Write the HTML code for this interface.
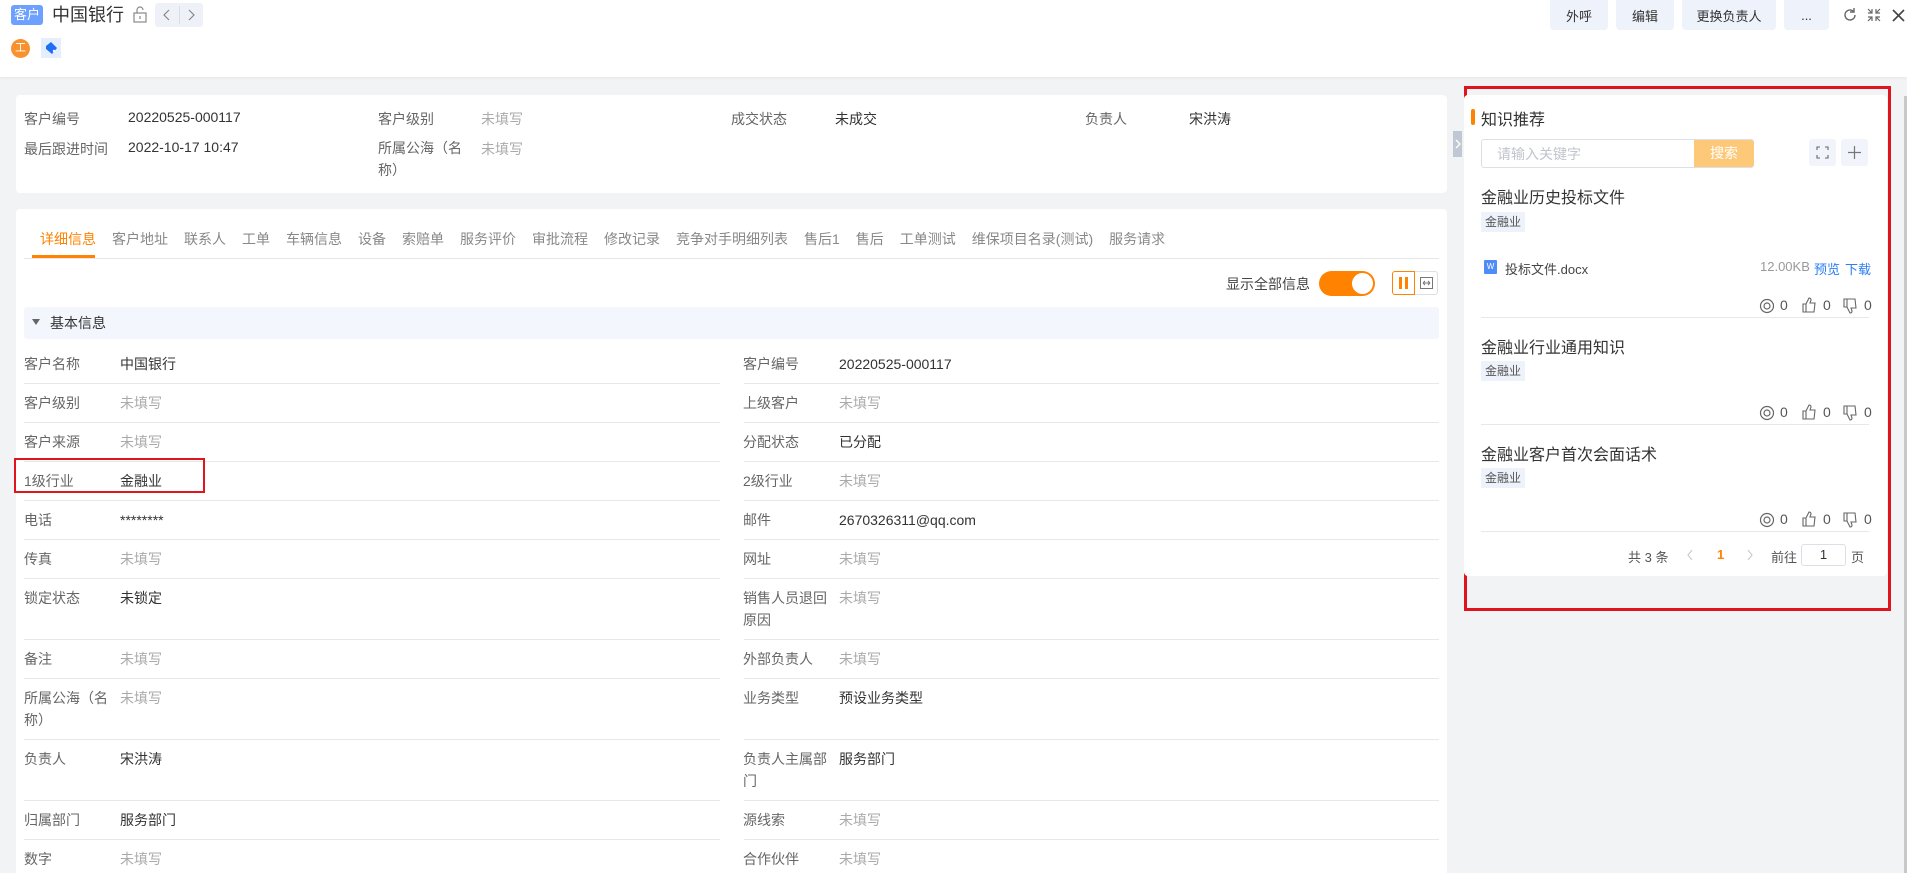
<!DOCTYPE html>
<html><head><meta charset="utf-8">
<style>
*{box-sizing:border-box;margin:0;padding:0}
body{width:1907px;height:873px;overflow:hidden;background:#f2f3f5;font-family:"Liberation Sans","Noto Sans CJK SC",sans-serif;font-size:14px;color:#333;position:relative}
.a{position:absolute;white-space:nowrap}
.lb{color:#666}
.ph{color:#aaa}
.btn{position:absolute;top:0;height:30px;background:#eef2fb;border-radius:0 0 4px 4px;font-size:13px;color:#333;display:flex;align-items:center;justify-content:center}
.tabs span{margin-right:16px;color:#888}
.dv{position:absolute;height:1px;background:#e8e8e8}
.tag{position:absolute;left:1481px;width:44px;height:20px;background:#eef2fb;font-size:12px;color:#555;text-align:center;line-height:20px}
.ktitle{position:absolute;left:1481px;font-size:16px;color:#333}
</style></head><body>
<!-- header -->
<div class="a" style="left:0;top:0;width:1907px;height:77px;background:#fff;box-shadow:0 1px 3px rgba(0,0,0,.06)"></div>
<div class="a" style="left:11px;top:5px;width:32px;height:20px;background:#6ea0ff;border-radius:3px;color:#fff;font-size:13px;text-align:center;line-height:20px">客户</div>
<div class="a" style="left:52px;top:2px;font-size:18px;color:#333;line-height:26px">中国银行</div>
<svg class="a" style="left:132px;top:6px" width="16" height="17" viewBox="0 0 16 17"><rect x="2" y="7" width="12" height="9" fill="none" stroke="#888" stroke-width="1.2"/><path d="M5 7V4a3 3 0 0 1 6 0" fill="none" stroke="#888" stroke-width="1.2"/><path d="M8 10v3" stroke="#888" stroke-width="1.2"/></svg>
<div class="a" style="left:155px;top:3px;width:48px;height:24px;background:#eef1f8;border-radius:3px"></div>
<div class="a" style="left:179px;top:6px;width:1px;height:18px;background:#d8dce5"></div>
<svg class="a" style="left:162px;top:9px" width="10" height="12"><path d="M7 1L2 6l5 5" fill="none" stroke="#888" stroke-width="1.2"/></svg>
<svg class="a" style="left:186px;top:9px" width="10" height="12"><path d="M3 1l5 5-5 5" fill="none" stroke="#888" stroke-width="1.2"/></svg>
<div class="a" style="left:11px;top:39px;width:19px;height:19px;border-radius:50%;background:#f7922e;color:#fff;font-size:11px;text-align:center;line-height:19px">工</div>
<div class="a" style="left:41px;top:38px;width:20px;height:20px;background:#e4eeff"></div>
<svg class="a" style="left:43px;top:40px" width="16" height="16"><path d="M3 6l5-4 6 6-5 6-6-5z" fill="#1f6ff5"/><circle cx="11" cy="11" r="1.2" fill="#fff"/></svg>
<div class="btn" style="left:1550px;width:58px">外呼</div>
<div class="btn" style="left:1616px;width:58px">编辑</div>
<div class="btn" style="left:1682px;width:94px">更换负责人</div>
<div class="btn" style="left:1784px;width:45px">...</div>
<svg class="a" style="left:1842px;top:7px" width="16" height="16"><path d="M13 8a5 5 0 1 1-1.6-3.7" fill="none" stroke="#666" stroke-width="1.4"/><path d="M12 1v4h-4" fill="none" stroke="#666" stroke-width="1.4"/></svg>
<svg class="a" style="left:1866px;top:7px" width="16" height="16"><path d="M2 2l4 4M6 2v4H2M14 2l-4 4M10 2v4h4M2 14l4-4M2 10h4v4M14 14l-4-4M14 10h-4v4" fill="none" stroke="#666" stroke-width="1.2"/></svg>
<svg class="a" style="left:1891px;top:8px" width="15" height="15"><path d="M2 2l11 11M13 2L2 13" stroke="#444" stroke-width="1.6"/></svg>

<!-- top card -->
<div class="a" style="left:16px;top:95px;width:1431px;height:98px;background:#fff;border-radius:4px"></div>
<div class="a lb" style="left:24px;top:109px">客户编号</div>
<div class="a" style="left:128px;top:109px">20220525-000117</div>
<div class="a lb" style="left:378px;top:109px">客户级别</div>
<div class="a ph" style="left:481px;top:109px">未填写</div>
<div class="a lb" style="left:731px;top:109px">成交状态</div>
<div class="a" style="left:835px;top:109px">未成交</div>
<div class="a lb" style="left:1085px;top:109px">负责人</div>
<div class="a" style="left:1189px;top:109px">宋洪涛</div>
<div class="a lb" style="left:24px;top:139px">最后跟进时间</div>
<div class="a" style="left:128px;top:139px">2022-10-17 10:47</div>
<div class="a lb" style="left:378px;top:137px;line-height:22px;white-space:normal;width:88px">所属公海（名称）</div>
<div class="a ph" style="left:481px;top:139px">未填写</div>
<div class="a" style="left:1453px;top:131px;width:9px;height:26px;background:#c0c8d4"></div>
<svg class="a" style="left:1454px;top:139px" width="8" height="10"><path d="M2 1l4 4-4 4" fill="none" stroke="#fff" stroke-width="1.3"/></svg>

<!-- main card -->
<div class="a" style="left:16px;top:209px;width:1431px;height:664px;background:#fff;border-radius:4px 4px 0 0"></div>
<div class="a tabs" style="left:40px;top:229px;font-size:14px"><span style="color:#ff8200">详细信息</span><span>客户地址</span><span>联系人</span><span>工单</span><span>车辆信息</span><span>设备</span><span>索赔单</span><span>服务评价</span><span>审批流程</span><span>修改记录</span><span>竞争对手明细列表</span><span>售后1</span><span>售后</span><span>工单测试</span><span>维保项目名录(测试)</span><span>服务请求</span></div>
<div class="a" style="left:24px;top:258px;width:1415px;height:1px;background:#e6e6e6"></div>
<div class="a" style="left:32px;top:255px;width:63px;height:3px;background:#ff8200"></div>
<div class="a" style="left:1226px;top:274px;color:#444">显示全部信息</div>
<div class="a" style="left:1319px;top:271px;width:56px;height:25px;border-radius:13px;background:#ff8200"></div>
<div class="a" style="left:1352px;top:273px;width:21px;height:21px;border-radius:50%;background:#fff"></div>
<div class="a" style="left:1392px;top:271px;width:23px;height:24px;border:1px solid #ff8200;border-radius:3px 0 0 3px"></div>
<div class="a" style="left:1399px;top:277px;width:3px;height:12px;background:#ff8200"></div>
<div class="a" style="left:1405px;top:277px;width:3px;height:12px;background:#ff8200"></div>
<div class="a" style="left:1415px;top:271px;width:23px;height:24px;border:1px solid #dcdfe6;border-left:none;border-radius:0 3px 3px 0"></div>
<svg class="a" style="left:1420px;top:277px" width="13" height="12"><rect x="0.5" y="0.5" width="12" height="11" fill="none" stroke="#777"/><path d="M3 6h7M3 6l2-2M3 6l2 2M10 6l-2-2M10 6l-2 2" stroke="#777"/></svg>
<div class="a" style="left:24px;top:307px;width:1415px;height:32px;background:#f3f6fd;border-radius:3px"></div>
<svg class="a" style="left:32px;top:319px" width="8" height="7"><path d="M0 0h8L4 6z" fill="#666"/></svg>
<div class="a" style="left:50px;top:313px;color:#333">基本信息</div>

<div id="rows"></div>
<script>
var R=[
["客户名称","中国银行",0,"客户编号","20220525-000117",0,353,383],
["客户级别","未填写",1,"上级客户","未填写",1,392,422],
["客户来源","未填写",1,"分配状态","已分配",0,431,461],
["1级行业","金融业",0,"2级行业","未填写",1,470,500],
["电话","********",0,"邮件","2670326311@qq.com",0,509,539],
["传真","未填写",1,"网址","未填写",1,548,578],
["锁定状态","未锁定",0,"销售人员退回原因","未填写",1,587,639],
["备注","未填写",1,"外部负责人","未填写",1,648,678],
["所属公海（名称）","未填写",1,"业务类型","预设业务类型",0,687,739],
["负责人","宋洪涛",0,"负责人主属部门","服务部门",0,748,800],
["归属部门","服务部门",0,"源线索","未填写",1,809,839],
["数字","未填写",1,"合作伙伴","未填写",1,848,-1]];
var h="";
R.forEach(function(r){
var t=r[6];
h+='<div class="a lb" style="left:24px;top:'+t+'px;width:84px;white-space:normal;line-height:22px">'+r[0]+'</div>';
h+='<div class="a '+(r[2]?'ph':'')+'" style="left:120px;top:'+t+'px;line-height:22px">'+r[1]+'</div>';
h+='<div class="a lb" style="left:743px;top:'+t+'px;width:84px;white-space:normal;line-height:22px">'+r[3]+'</div>';
h+='<div class="a '+(r[5]?'ph':'')+'" style="left:839px;top:'+t+'px;line-height:22px">'+r[4]+'</div>';
if(r[7]>0){h+='<div class="dv" style="left:24px;top:'+r[7]+'px;width:696px"></div><div class="dv" style="left:744px;top:'+r[7]+'px;width:695px"></div>';}
});
document.getElementById("rows").innerHTML=h;
</script>
<div class="a" style="left:14px;top:458px;width:191px;height:35px;border:2px solid #e0141e"></div>

<!-- right panel -->
<div class="a" style="left:1464px;top:86px;width:427px;height:525px;border:3px solid #e0141e"></div>
<div class="a" style="left:1464px;top:95px;width:423px;height:481px;background:#fff;border-radius:4px"></div>
<div class="a" style="left:1471px;top:109px;width:4px;height:16px;background:#ff8200;border-radius:2px"></div>
<div class="a" style="left:1481px;top:106px;font-size:16px;color:#333">知识推荐</div>
<div class="a" style="left:1481px;top:139px;width:273px;height:29px;border:1px solid #dcdfe6;border-radius:3px"></div>
<div class="a" style="left:1497px;top:143px;color:#c0c4cc;font-size:14px;line-height:22px">请输入关键字</div>
<div class="a" style="left:1694px;top:140px;width:60px;height:27px;background:#fdc878;color:#fff;text-align:center;line-height:27px;font-size:14px;border-radius:0 3px 3px 0">搜索</div>
<div class="a" style="left:1809px;top:139px;width:27px;height:27px;background:#f1f4fb;border-radius:3px"></div>
<svg class="a" style="left:1816px;top:146px" width="13" height="13"><path d="M1 4V1h3M9 1h3v3M12 9v3H9M4 12H1V9" fill="none" stroke="#666" stroke-width="1.1"/></svg>
<div class="a" style="left:1841px;top:139px;width:27px;height:27px;background:#f1f4fb;border-radius:3px"></div>
<svg class="a" style="left:1847px;top:145px" width="15" height="15"><path d="M7.5 1v13M1 7.5h13" stroke="#777" stroke-width="1.2"/></svg>

<div class="ktitle" style="top:184px">金融业历史投标文件</div>
<div class="tag" style="top:212px">金融业</div>
<div class="a" style="left:1484px;top:260px;width:13px;height:14px;background:#4e8cf7;color:#fff;font-size:8px;text-align:center;line-height:14px;border-radius:1px">W</div>
<div class="a" style="left:1505px;top:259px;font-size:13px;color:#444">投标文件.docx</div>
<div class="a" style="left:1760px;top:259px;font-size:13px;color:#999">12.00KB</div>
<div class="a" style="left:1814px;top:259px;font-size:13px;color:#2a7df3">预览</div>
<div class="a" style="left:1845px;top:259px;font-size:13px;color:#2a7df3">下载</div>

<div id="stats"></div>
<div class="dv" style="left:1481px;top:317px;width:388px"></div>
<div class="ktitle" style="top:334px">金融业行业通用知识</div>
<div class="tag" style="top:361px">金融业</div>
<div class="dv" style="left:1481px;top:424px;width:388px"></div>
<div class="ktitle" style="top:441px">金融业客户首次会面话术</div>
<div class="tag" style="top:468px">金融业</div>
<div class="dv" style="left:1481px;top:531px;width:388px"></div>
<script>
var s="";[306,413,520].forEach(function(y){
var t=y-9;
s+='<svg class="a" style="left:1759px;top:'+(t+1)+'px" width="16" height="16"><circle cx="8" cy="8" r="6.5" fill="none" stroke="#666" stroke-width="1.2"/><circle cx="8" cy="8" r="3" fill="none" stroke="#666" stroke-width="1.2"/></svg><div class="a" style="left:1780px;top:'+t+'px;color:#555">0</div>';
s+='<svg class="a" style="left:1802px;top:'+t+'px" width="15" height="16"><path d="M1 7h3v8H1zM4 7l3-6c1.5 0 2 1 2 2l-1 3h5l-1 9H4" fill="none" stroke="#666" stroke-width="1.1"/></svg><div class="a" style="left:1823px;top:'+t+'px;color:#555">0</div>';
s+='<svg class="a" style="left:1843px;top:'+(t+1)+'px" width="15" height="16"><path d="M1 1h3v8H1zM4 9l3 6c1.5 0 2-1 2-2l-1-3h5L12 1H4" fill="none" stroke="#666" stroke-width="1.1"/></svg><div class="a" style="left:1864px;top:'+t+'px;color:#555">0</div>';
});document.getElementById("stats").innerHTML=s;
</script>
<div class="a" style="left:1628px;top:547px;font-size:13px;color:#555">共 3 条</div>
<svg class="a" style="left:1686px;top:549px" width="8" height="12"><path d="M6 1L2 6l4 5" fill="none" stroke="#ccc" stroke-width="1.2"/></svg>
<div class="a" style="left:1717px;top:547px;font-size:13px;color:#ff8200;font-weight:bold">1</div>
<svg class="a" style="left:1746px;top:549px" width="8" height="12"><path d="M2 1l4 5-4 5" fill="none" stroke="#ccc" stroke-width="1.2"/></svg>
<div class="a" style="left:1771px;top:547px;font-size:13px;color:#555">前往</div>
<div class="a" style="left:1801px;top:544px;width:45px;height:22px;border:1px solid #dcdfe6;border-radius:3px;text-align:center;line-height:20px;font-size:13px">1</div>
<div class="a" style="left:1851px;top:547px;font-size:13px;color:#555">页</div>
<div class="a" style="left:1904px;top:96px;width:3px;height:777px;background:#c8c8c8"></div>
</body></html>
